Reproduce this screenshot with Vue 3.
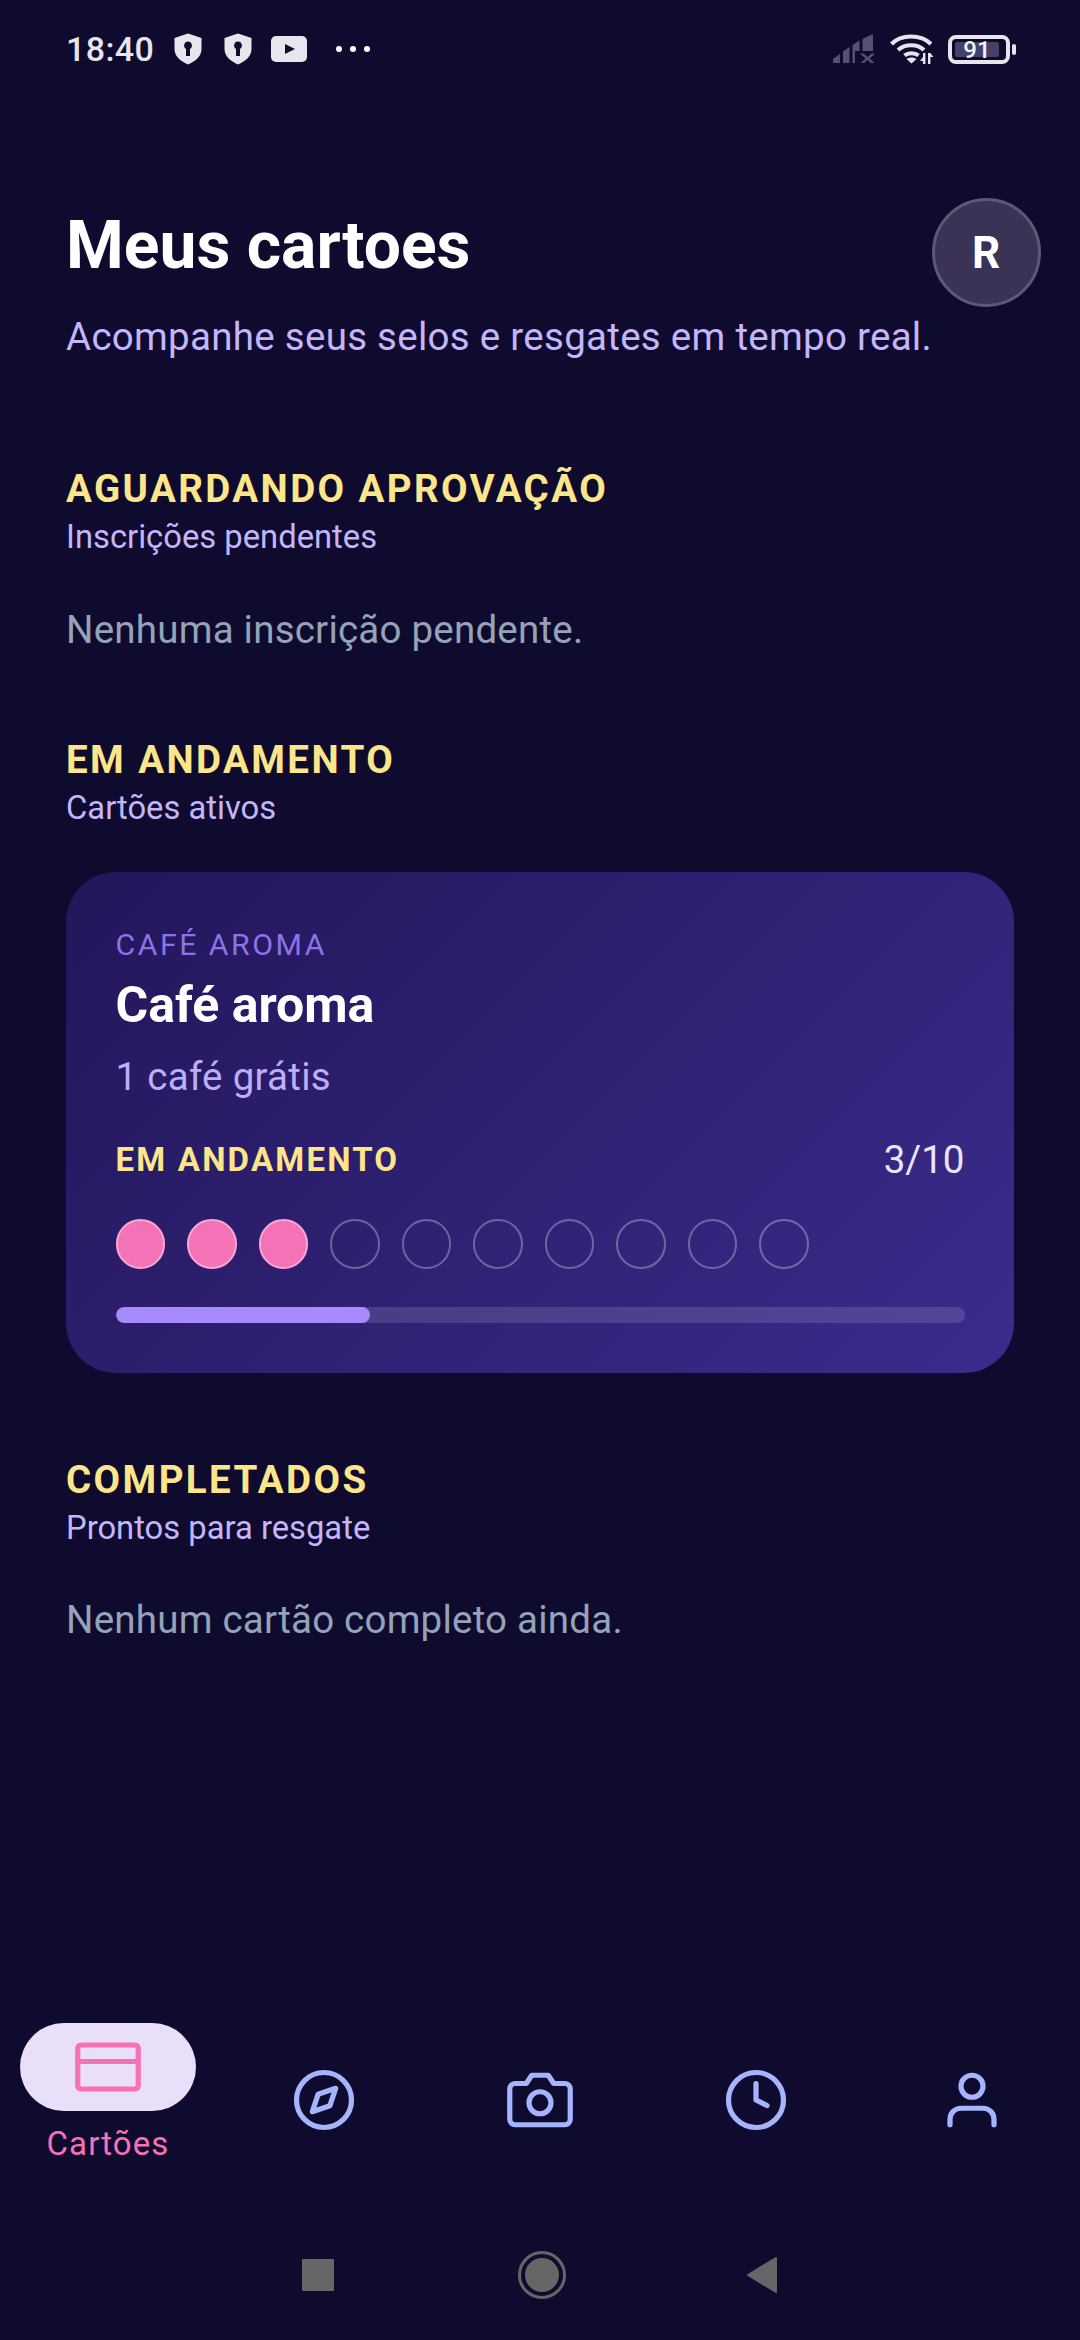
<script setup>
const dots = Array.from({ length: 10 }, (_, i) => i < 3)
</script>

<template>
  <div class="screen">
    <div class="status">
      <span class="time">18:40</span>
      <svg class="shield first" width="28" height="32" viewBox="0 0 28 32">
        <path fill="#e6e6ec" d="M14 0.5 L27.5 5 V16 C27.5 23.5 21 28.5 14 31.5 C7 28.5 0.5 23.5 0.5 16 V5 Z" />
        <path fill="#0f0b2e" d="M14 8.5 a4 4 0 0 1 2 7.4 V23 h-4 V15.9 a4 4 0 0 1 2 -7.4 Z" />
      </svg>
      <svg class="shield" width="28" height="32" viewBox="0 0 28 32">
        <path fill="#e6e6ec" d="M14 0.5 L27.5 5 V16 C27.5 23.5 21 28.5 14 31.5 C7 28.5 0.5 23.5 0.5 16 V5 Z" />
        <path fill="#0f0b2e" d="M14 8.5 a4 4 0 0 1 2 7.4 V23 h-4 V15.9 a4 4 0 0 1 2 -7.4 Z" />
      </svg>
      <svg class="yt" width="36" height="26" viewBox="0 0 36 26">
        <rect width="36" height="26" rx="5" fill="#e6e6ec" />
        <path fill="#0f0b2e" d="M14 8 L24 13 L14 18 Z" />
      </svg>
      <svg class="more" width="34" height="6" viewBox="0 0 34 6">
        <circle cx="3" cy="3" r="3" fill="#fff" />
        <circle cx="17" cy="3" r="3" fill="#fff" />
        <circle cx="31" cy="3" r="3" fill="#fff" />
      </svg>
      <span class="grow"></span>
      <svg width="41" height="30" viewBox="0 0 41 30">
        <g fill="#55526f">
          <path d="M0 29 V25 L7 20 V29 Z" />
          <path d="M10 29 V17.5 L16.5 13 V29 Z" />
          <path d="M19.5 29 V11 L26.5 6.5 V17 H22 V29 Z" />
          <path d="M29.5 17 V5 L40 0 V17 Z" />
          <path d="M27 19.5 h3.6 l4 3.4 l4 -3.4 h2.4 v1.2 l-4.4 3.8 l4.4 3.8 v0.6 h-3 l-3.4 -3 l-3.6 3 h-3.4 l5 -4.4 Z" />
        </g>
      </svg>
      <svg class="wifi" width="44" height="32" viewBox="0 0 44 32">
        <g fill="none" stroke="#e6e6ec" stroke-width="4">
          <path d="M1.5 11 C11 1 31 1 41 11" />
          <path d="M8 17 C15 10.5 27.5 10.5 34 17" />
          <path d="M14.5 22.5 C18 19.5 25 19.5 28.5 22.5" />
        </g>
        <path d="M16.5 26 C19.5 24 23.5 24 26.5 26 L21.5 30.5 Z" fill="#e6e6ec" />
        <path d="M33 20 h2.4 v11 h-2.4 Z M30 28 l3 -4 v4 Z M38 20 h2.4 v11 h-2.4 Z M40.4 20 l3 4 h-3 Z" fill="#e6e6ec" />
      </svg>
      <div class="battery"><div class="level">91</div></div>
      <span class="tip"></span>
    </div>

    <header class="head">
      <div class="head-text">
        <h1>Meus cartoes</h1>
        <p>Acompanhe seus selos e resgates em tempo real.</p>
      </div>
      <div class="avatar">R</div>
    </header>

    <section class="sec first-sec">
      <h2>AGUARDANDO APROVAÇÃO</h2>
      <h3>Inscrições pendentes</h3>
      <p class="empty">Nenhuma inscrição pendente.</p>
    </section>

    <section class="sec">
      <h2>EM ANDAMENTO</h2>
      <h3>Cartões ativos</h3>
      <div class="card">
        <div class="brand">CAFÉ AROMA</div>
        <div class="name">Café aroma</div>
        <div class="reward">1 café grátis</div>
        <div class="row">
          <span class="state">EM ANDAMENTO</span>
          <span class="count">3/10</span>
        </div>
        <div class="dots">
          <span v-for="(on, i) in dots" :key="i" class="dot" :class="{ on }"></span>
        </div>
        <div class="track"><div class="fill" :style="{ width: '30%' }"></div></div>
      </div>
    </section>

    <section class="sec">
      <h2>COMPLETADOS</h2>
      <h3>Prontos para resgate</h3>
      <p class="empty">Nenhum cartão completo ainda.</p>
    </section>

    <span class="grow"></span>

    <nav class="tabs">
      <div class="tab active">
        <div class="pill">
          <svg class="ico" viewBox="0 0 24 24"><rect x="1" y="4" width="22" height="16" rx="1.2" /><line x1="1" y1="10" x2="23" y2="10" /></svg>
        </div>
        <span class="label">Cartões</span>
      </div>
      <div class="tab">
        <svg class="ico" viewBox="0 0 24 24"><circle cx="12" cy="12" r="10" /><polygon points="16.24 7.76 14.12 14.12 7.76 16.24 9.88 9.88 16.24 7.76" /></svg>
      </div>
      <div class="tab">
        <svg class="ico" viewBox="0 0 24 24"><path d="M23 19a2 2 0 0 1-2 2H3a2 2 0 0 1-2-2V8a2 2 0 0 1 2-2h4l2-3h6l2 3h4a2 2 0 0 1 2 2z" /><circle cx="12" cy="13" r="4" /></svg>
      </div>
      <div class="tab">
        <svg class="ico" viewBox="0 0 24 24"><circle cx="12" cy="12" r="10" /><polyline points="12 6 12 12 16 14" /></svg>
      </div>
      <div class="tab">
        <svg class="ico" viewBox="0 0 24 24"><path d="M20 21v-2a4 4 0 0 0-4-4H8a4 4 0 0 0-4 4v2" /><circle cx="12" cy="7" r="4" /></svg>
      </div>
    </nav>

    <div class="sysnav">
      <span class="square"></span>
      <svg class="home" width="48" height="48" viewBox="0 0 48 48">
        <circle cx="24" cy="24" r="22.5" fill="none" stroke="#666" stroke-width="3" />
        <circle cx="24" cy="24" r="17" fill="#666" />
      </svg>
      <svg class="back" width="32" height="38" viewBox="0 0 32 38">
        <path d="M30 2 V36 L2 19 Z" fill="#666" stroke="#666" stroke-width="2" stroke-linejoin="round" />
      </svg>
    </div>
  </div>
</template>

<style>
html, body { background: #0f0b2e; }
</style>

<style scoped>
.screen {
  width: 1080px;
  height: 2340px;
  background: #0f0b2e;
  display: flex;
  flex-direction: column;
  font-family: Roboto, "Noto Sans", sans-serif;
  overflow: hidden;
}
.grow { flex: 1; }

.status {
  height: 98px;
  flex: none;
  display: flex;
  align-items: center;
  padding: 0 64px 0 66px;
}
.time { font-size: 34px; font-weight: 500; letter-spacing: 0.4px; color: #e6e6ec; width: 88px; }
.shield.first { margin-left: 20px; }
.shield { margin-right: 22px; }
.yt { margin-left: -3px; }
.more { margin-left: 29px; }
.wifi { margin-left: 16px; }
.battery {
  margin-left: 14px;
  width: 62px;
  height: 29px;
  box-sizing: border-box;
  border: 4px solid #e6e6ec;
  border-radius: 8px;
  padding: 3px;
}
.level {
  width: 44px;
  height: 15px;
  background: #45426a;
  border-radius: 2px;
  color: #f2f2f6;
  font-size: 24px;
  font-weight: 500;
  line-height: 16px;
  text-align: center;
}
.tip { width: 4px; height: 11px; background: #e6e6ec; border-radius: 2px; margin-left: 2px; }

.head {
  flex: none;
  display: flex;
  justify-content: space-between;
  align-items: flex-start;
  margin-top: 100px;
  padding: 0 39.5px 0 66px;
}
.head h1 {
  margin: 4px 0 0;
  font-size: 66px;
  line-height: 88px;
  font-weight: 700;
  color: #fff;
}
.head p {
  margin: 21px 0 0;
  width: 880px;
  font-size: 38.5px;
  line-height: 52px;
  letter-spacing: 0.28px;
  color: #c4b5fd;
}
.avatar {
  width: 109px;
  height: 109px;
  box-sizing: border-box;
  flex: none;
  margin-left: -60px;
  border-radius: 50%;
  background: #3a3355;
  border: 3px solid #5d5873;
  color: #fff;
  font-size: 44px;
  font-weight: 700;
  display: flex;
  align-items: center;
  justify-content: center;
}

.sec { flex: none; padding: 0 66px; margin-top: 83.5px; }
.first-sec { margin-top: 104px; }
.sec h2 {
  margin: 0;
  font-size: 38.5px;
  line-height: 44px;
  font-weight: 700;
  letter-spacing: 2.4px;
  color: #fde68a;
}
.sec h3 {
  margin: 6px 0 0;
  font-size: 32.75px;
  line-height: 40px;
  font-weight: 400;
  color: #c4b5fd;
}
.empty {
  margin: 47.5px 0 0;
  font-size: 38.5px;
  line-height: 50px;
  letter-spacing: 0.22px;
  color: #94a3b8;
}

.card {
  margin-top: 44px;
  margin-bottom: 1px;
  height: 501px;
  box-sizing: border-box;
  padding: 51.5px 49.5px 0;
  border-radius: 50px;
  background: linear-gradient(135deg, #23165a, #3a2c8c);
}
.brand { font-size: 30.25px; line-height: 42px; letter-spacing: 2.5px; color: #8b73e8; }
.name { margin-top: 9px; font-size: 50px; line-height: 60px; font-weight: 700; color: #fff; }
.reward { margin-top: 17px; font-size: 38.5px; line-height: 50px; letter-spacing: 0.28px; color: #bcaef8; }
.row { display: flex; justify-content: space-between; align-items: center; margin-top: 33px; height: 50px; }
.state { font-size: 33px; font-weight: 700; letter-spacing: 2.2px; color: #fde68a; }
.count { font-size: 38.5px; color: #e9e5ff; }
.dots { display: flex; gap: 22px; margin-top: 34.5px; }
.dot {
  width: 49.5px;
  height: 49.5px;
  box-sizing: border-box;
  border-radius: 50%;
  border: 2.5px solid rgba(255, 255, 255, 0.3);
}
.dot.on { background: #f472b6; border-color: #f9a8d4; }
.track {
  margin-top: 38px;
  height: 16.5px;
  border-radius: 9px;
  background: rgba(255, 255, 255, 0.13);
  overflow: hidden;
}
.fill { height: 100%; background: #a78bfa; border-radius: 9px; }

.tabs { flex: none; height: 200px; display: flex; margin-bottom: 10px; }
.tab { flex: 1; display: flex; flex-direction: column; align-items: center; justify-content: center; }
.tab.active { padding-bottom: 11px; }
.pill {
  width: 176px;
  height: 88px;
  border-radius: 44px;
  background: #e9dff8;
  display: flex;
  align-items: center;
  justify-content: center;
}
.ico {
  width: 66px;
  height: 66px;
  fill: none;
  stroke: #a5b4fc;
  stroke-width: 1.9;
  stroke-linecap: round;
  stroke-linejoin: round;
}
.active .ico { stroke: #f472b6; }
.label {
  margin-top: 11px;
  font-size: 33px;
  line-height: 44px;
  letter-spacing: 1.1px;
  color: #f472b6;
}

.sysnav { flex: none; height: 130px; display: flex; align-items: center; justify-content: center; }
.square { width: 32px; height: 32px; background: #666; border-radius: 1px; margin-right: 184px; }
.back { margin-left: 180px; }
</style>
